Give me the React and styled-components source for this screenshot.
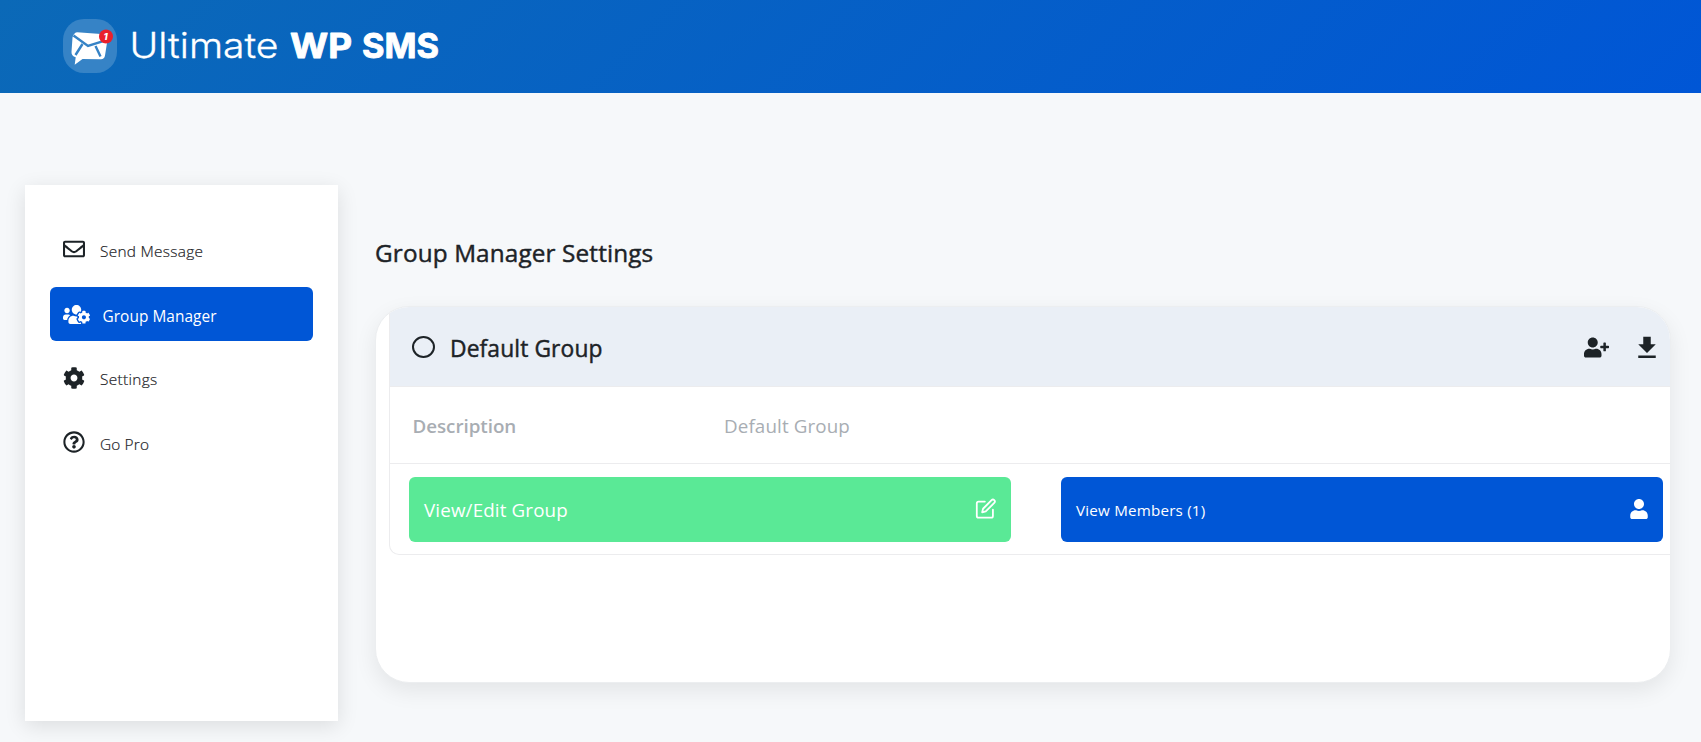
import React from "react";
import styled, { createGlobalStyle } from "styled-components";
import {
  FaRegEnvelope,
  FaUsersCog,
  FaCog,
  FaRegQuestionCircle,
  FaUser,
  FaUserPlus,
} from "react-icons/fa";
import { FiEdit } from "react-icons/fi";
import { MdFileDownload } from "react-icons/md";

const Global = createGlobalStyle`
  *, *::before, *::after { box-sizing: border-box; }
  body {
    margin: 0;
    background: #f6f8fa;
    color: #1d2327;
    font-family: "Open Sans", "Noto Sans", sans-serif;
    overflow: hidden;
  }
  svg { display: block; flex: none; }
`;

const Page = styled.div`
  height: 742px;
`;

const Header = styled.header`
  height: 93px;
  padding: 19px 0 0 63px;
  background: linear-gradient(135deg, #0b69b7 0%, #0056d6 100%);
`;

const Layout = styled.main`
  display: flex;
  align-items: flex-start;
  gap: 37px;
  padding: 92px 30px 0 25px;
`;

const Sidebar = styled.nav`
  display: flex;
  flex-direction: column;
  gap: 10.4px;
  width: 313px;
  height: 536px;
  padding: 38px 25px 0;
  background: #fff;
  box-shadow: 0 5px 20px rgba(0, 0, 0, 0.11);
`;

const NavItem = styled.a`
  display: flex;
  align-items: center;
  gap: ${(p) => (p.$active ? 12.5 : 15)}px;
  width: 263px;
  height: 54px;
  padding: 0 13px ${(p) => (p.$active ? 0 : 2)}px;
  border-radius: 6px;
  background: ${(p) => (p.$active ? "#0056d6" : "transparent")};
  color: ${(p) => (p.$active ? "#fff" : "#1d2327")};
`;

const NavLabel = styled.span`
  padding-top: ${(p) => p.$drop}px;
  font-size: 15.4px;
  line-height: 20px;
  font-weight: ${(p) => (p.$active ? 400 : 300)};
  -webkit-text-stroke: ${(p) => (p.$active ? 0 : 0.2)}px currentColor;
  letter-spacing: ${(p) => p.$spacing}px;
  white-space: nowrap;
`;

const Content = styled.section`
  flex: 1;
  padding-top: 51px;
`;

const Title = styled.h1`
  margin: 0 0 36px;
  font-size: 24.3px;
  line-height: 34px;
  font-weight: 400;
  letter-spacing: 0.14px;
  -webkit-text-stroke: 0.45px currentColor;
`;

const Card = styled.div`
  width: 1296px;
  height: 377px;
  padding-left: 13px;
  overflow: hidden;
  border: 1px solid #eceef0;
  border-radius: 34px;
  background: #fff;
  box-shadow: 0 8px 22px rgba(0, 0, 0, 0.08);
`;

const Group = styled.div`
  height: 248px;
  border: solid #ececee;
  border-width: 0 0 1px 1px;
  border-radius: 0 0 0 10px;
`;

const GroupHeader = styled.div`
  display: flex;
  align-items: center;
  height: 80px;
  padding: 2px 8px 0 22px;
  border-bottom: 1px solid #ececee;
  background: #eaeff6;
`;

const Radio = styled.span`
  width: 23px;
  height: 22px;
  margin-bottom: 1px;
  border: 2px solid #1d2327;
  border-radius: 50%;
`;

const GroupName = styled.h2`
  flex: 1;
  margin: 2px 0 0 15px;
  font-size: 22.8px;
  font-weight: 400;
  letter-spacing: 0.12px;
  -webkit-text-stroke: 0.45px currentColor;
`;

const HeaderActions = styled.div`
  display: flex;
  align-items: center;
  gap: 23px;
`;

const Description = styled.div`
  display: grid;
  grid-template-columns: 311.5px 1fr;
  align-items: center;
  height: 77px;
  padding: 2px 0 0 22.5px;
  border-bottom: 1px solid #ececee;
  color: #a8adb3;
  font-size: 18.8px;
  letter-spacing: 0.12px;
`;

const Term = styled.span`
  font-weight: 600;
  letter-spacing: -0.04px;
`;

const Actions = styled.div`
  display: grid;
  grid-template-columns: 602px 602px;
  gap: 50px;
  padding: 13px 0 0 19px;
`;

const ActionButton = styled.button`
  display: flex;
  align-items: center;
  justify-content: space-between;
  height: 65px;
  padding: 0 ${(p) => p.$end}px 0 15px;
  border: 0;
  border-radius: 6px;
  background: ${(p) => p.$color};
  color: #fff;
  font-family: inherit;
  font-size: ${(p) => p.$size}px;
  letter-spacing: ${(p) => p.$spacing}px;

  svg {
    margin-bottom: 2px;
  }
`;

const BoldWord = styled.text`
  font: 700 33.5px Inter, sans-serif;
  stroke: #fff;
  stroke-width: 0.9px;
  stroke-linejoin: round;
`;

function Logo() {
  return (
    <svg width="380" height="54" viewBox="0 0 380 54" fill="#fff">
      <rect width="54" height="54" rx="21" fill="#3683c6" />
      <path d="M14 13.3 L38 15 L44.3 22 L42 36.5 Q41.3 40.3 38 40.3 L19.5 40 L11.7 45.8 L12.7 38.3 Q8.3 37 8.5 33 L9.5 18.5 Q10.5 14 14 13.3Z" />
      <path
        d="M10.5 16.5 L25 27 L41 21.8 M12.5 36 L19.5 25 M32.5 27 L37.5 37.5"
        fill="none"
        stroke="#3683c6"
        strokeWidth="2.4"
      />
      <circle cx="43" cy="17.5" r="7" fill="#e9202c" />
      <text x="42.7" y="21" textAnchor="middle" fontFamily="Inter, sans-serif" fontSize="9.5" fontWeight="800" fontStyle="italic">
        1
      </text>
      <text
        x="66.5"
        y="39.2"
        textLength="149"
        lengthAdjust="spacingAndGlyphs"
        fontFamily="Inter, sans-serif"
        fontSize="35"
        fontWeight="300"
        stroke="#fff"
        strokeWidth="0.3"
      >
        Ultimate
      </text>
      <BoldWord x="227" y="38.9" textLength="62" lengthAdjust="spacingAndGlyphs">
        WP
      </BoldWord>
      <BoldWord x="299" y="38.9" textLength="77" lengthAdjust="spacingAndGlyphs">
        SMS
      </BoldWord>
    </svg>
  );
}

const NAV = [
  { label: "Send Message", Icon: FaRegEnvelope, size: 22, spacing: 0.28, drop: 5 },
  { label: "Group Manager", Icon: FaUsersCog, size: 27, spacing: 0.06, drop: 5, active: true },
  { label: "Settings", Icon: FaCog, size: 22, spacing: 0.33, drop: 4 },
  { label: "Go Pro", Icon: FaRegQuestionCircle, size: 22, spacing: 0.15, drop: 5 },
];

export default function App() {
  return (
    <Page>
      <Global />
      <Header>
        <Logo />
      </Header>
      <Layout>
        <Sidebar>
          {NAV.map(({ label, Icon, size, spacing, drop, active }) => (
            <NavItem key={label} $active={active}>
              <Icon size={size} />
              <NavLabel $active={active} $spacing={spacing} $drop={drop}>
                {label}
              </NavLabel>
            </NavItem>
          ))}
        </Sidebar>
        <Content>
          <Title>Group Manager Settings</Title>
          <Card>
            <Group>
              <GroupHeader>
                <Radio />
                <GroupName>Default Group</GroupName>
                <HeaderActions>
                  <FaUserPlus size={25} />
                  <MdFileDownload size={30} />
                </HeaderActions>
              </GroupHeader>
              <Description>
                <Term>Description</Term>
                <span>Default Group</span>
              </Description>
              <Actions>
                <ActionButton $color="#5ae996" $size={18.8} $spacing={0.14} $end={14.5}>
                  View/Edit Group
                  <FiEdit size={21.5} />
                </ActionButton>
                <ActionButton $color="#0056d6" $size={15.2} $spacing={0.2} $end={14}>
                  View Members (1)
                  <FaUser size={20} />
                </ActionButton>
              </Actions>
            </Group>
          </Card>
        </Content>
      </Layout>
    </Page>
  );
}
